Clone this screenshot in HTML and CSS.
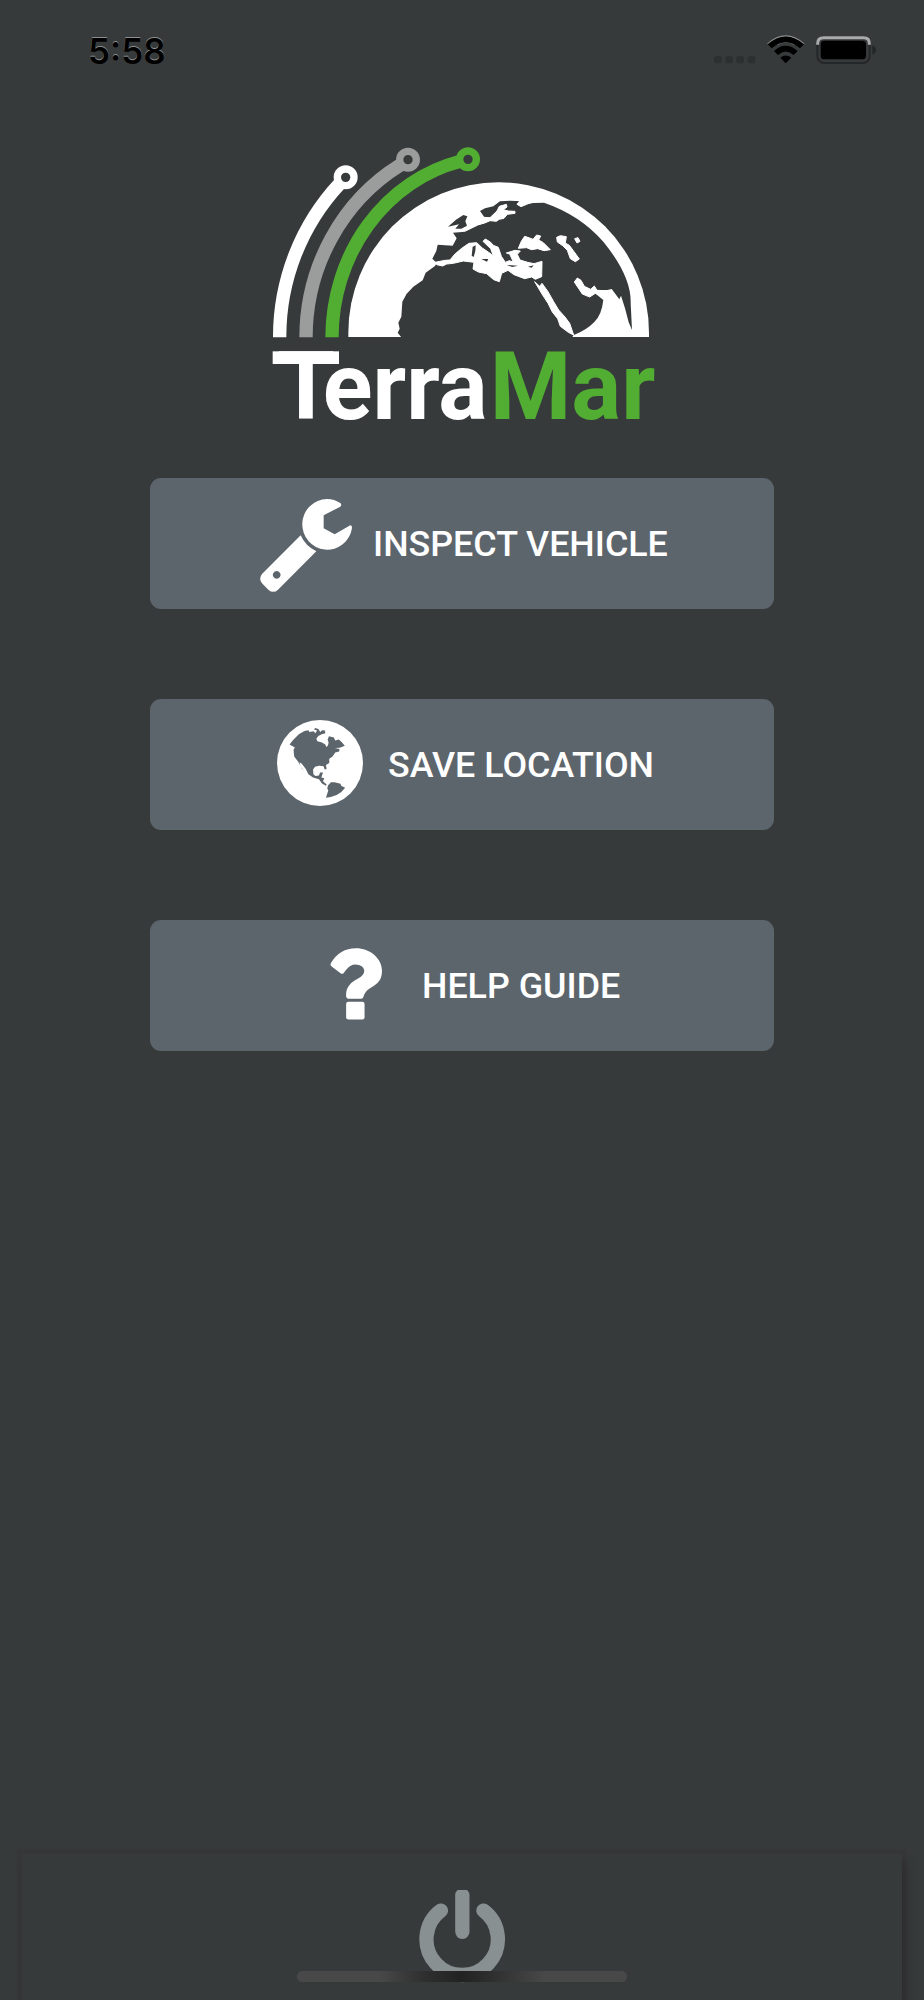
FILE: index.html
```html
<!DOCTYPE html>
<html lang="en">
<head>
    <meta charset="UTF-8">
    <meta name="viewport" content="width=device-width, initial-scale=1.0">
    <title>TerraMar</title>
    <link rel="stylesheet" href="styles.css">
</head>
<body>
<div class="screen">
    <header class="status-bar">
        <span class="time">5:58</span>
        <svg class="status-icons" viewBox="0 0 600 180" aria-hidden="true">
            <g fill="#2d3031">
                <rect x="42" y="108" width="23" height="22" rx="8"/>
                <rect x="76" y="108" width="23" height="22" rx="8"/>
                <rect x="109" y="108" width="23" height="22" rx="8"/>
                <rect x="143" y="108" width="23" height="22" rx="8"/>
            </g>
            <path d="M203 72Q257 24 312 72" fill="none" stroke="#8c8f8f" stroke-width="4"/>
            <path d="M230 74Q257 59 285 74" fill="none" stroke="#777" stroke-width="4"/>
            <g fill="#000">
                <path d="M203 73Q257 26 312 73L300 85Q257 48 215 85Z"/>
                <path d="M222 93Q257 62 293 93L281 105Q257 84 234 105Z"/>
                <path d="M241 113Q257 100 274 113L257 130Z"/>
            </g>
            <rect x="352" y="51" width="157" height="78" rx="20" fill="none" stroke="#242728" stroke-width="6"/>
            <path d="M353 74V70Q353 53 371 53H491Q508 53 508 70V74" fill="none" stroke="#a9abaa" stroke-width="9"/>
            <rect x="362" y="62" width="136" height="56" rx="11" fill="#000"/>
            <path d="M517 76Q528 80 528 90T517 104Z" fill="#242728"/>
        </svg>
    </header>
    <main>
        <svg class="logo" viewBox="0 0 1230 960" role="img" aria-label="TerraMar">
            <!-- orbit lines -->
            <g fill="none" stroke-width="40">
                <path d="M59 622A657 668 0 0 1 240 160" stroke="#fff"/>
                <path d="M138 622A578 602 0 0 1 421 105" stroke="#9b9d9c"/>
                <path d="M216 622A500 543 0 0 1 600 94" stroke="#52ae32"/>
            </g>
            <g fill="#373a3b" stroke-width="22">
                <circle cx="257" cy="142" r="25" stroke="#fff"/>
                <circle cx="444" cy="89" r="25" stroke="#9b9d9c"/>
                <circle cx="624" cy="88" r="25" stroke="#52ae32"/>
            </g>
            <!-- globe -->
            <path d="M265 621V608A451 451 0 0 1 1167 608V621Z" fill="#fff"/>
            <path class="land" d="M424 622L413 608 419 596 415 578 424 560 427 515 440 491 460 470 488 451 497 428 525 408 530 399 517 386 529 363 533 344 578 347 590 325 579 308 615 305 655 286 690 272 672 260 660 243 675 235 700 229 720 214 750 212 785 214 790 224 820 219 852 218Q960 255 1030 335Q1115 440 1112 520L1116 600 1106 577 1095 535 1083 497 1078 508 1055 477 1042 480 1027 483 1010 480 1005 490 1030 510Q1025 555 1003 576Q980 600 940 616L937 622Z"/>
            <path class="land" d="M564 290L588 269 610 255 622 259 616 274 621 287 604 296 586 296 597 283Z"/>
            <g class="water">
                <!-- Baltic and northern waters -->
                <path d="M660 247L670 262 690 263 711 243 718 229 739 223 741 231 730 239 745 243 765 244 765 250 742 253 732 265 718 268 709 274 690 272 674 279 655 284 655 245Z"/>
                <path d="M785 205L805 209 825 211 812 218 800 223 783 230 771 223Z"/>
                <!-- Mediterranean -->
                <path d="M525 397L555 391 570 390 584 373 605 355 627 340 650 338 667 354 686 367 700 377 692 356 669 334 676 327 691 336 700 346 715 352 724 379 736 397 748 392 760 396 749 372 739 369 765 361 781 363 772 373 780 390 803 397 822 401 846 394 845 440 826 448 815 441 794 446 762 434 744 421 725 430 718 455 701 449 680 431 655 426 639 417 642 397 610 393 580 400 560 402 548 408 530 404Z"/>
                <!-- Black Sea, Caspian -->
                <path d="M775 355L784 334 794 319 809 324 819 328 830 315 842 318 836 330 850 338 871 359 852 362 833 356 814 359 800 353Z"/>
                <path d="M890 322L901 317 919 320 916 339 928 346 940 362 958 387 946 395 931 386 922 361 908 347 892 336Z"/>
                <path d="M944 326L954 323 960 334 951 339Z"/>
                <!-- Red Sea, Persian Gulf -->
                <path d="M824 455L839 469 846 460 864 485 881 515 896 540 915 561 929 580 941 615 925 607 901 589 893 566 877 546 864 520 846 492Z"/>
                <path d="M943 456L952 444 963 451 973 469 992 478 1003 468 1011 481 1040 482 1042 505 1006 490 989 501 967 492Z"/>
            </g>
            <g class="land">
                <path d="M635 377L638 350 647 346 646 363 641 381Z"/>
                <path d="M664 387L685 387 681 395Z"/>
                <path d="M740 405L774 407 757 411Z"/>
                <path d="M804 410L821 406 815 413Z"/>
            </g>
            <!-- wordmark, the T has a wider bar -->
            <rect x="38" y="664" width="199" height="38" fill="#fff"/>
            <text class="wordmark" y="866" fill="#fff"><tspan x="51">T</tspan><tspan x="188" textLength="495" lengthAdjust="spacingAndGlyphs">erra</tspan></text>
            <text class="wordmark" x="689" y="866" fill="#52ae32" textLength="497" lengthAdjust="spacingAndGlyphs">Mar</text>
        </svg>
        <div class="menu">
            <button class="menu-button" type="button">
                <svg class="icon icon-wrench" viewBox="360 86 276 279" aria-hidden="true">
                    <path d="M602 99Q606 104 601 109L551 135V174L584 192L627 167Q636 161 636 173A75 76 0 1 1 561 86Q583 86 602 99Z"/>
                    <path fill-rule="evenodd" d="M482 195Q496 227 529 243L414 358Q400 371 385 358L366 339Q355 325 366 311ZM410 302A11.500 11.500 0 1 0 410.100 302Z"/>
                </svg>
                <span>INSPECT VEHICLE</span>
            </button>
            <button class="menu-button" type="button">
                <svg class="icon icon-globe" viewBox="110 90 260 260" aria-hidden="true">
                    <circle cx="240" cy="220" r="130"/>
                    <g fill="#5d656c">
                        <path d="M148 164L158 151 176 133 193 123 205 121 208 126 221 124 226 130 231 122 222 119 225 114 235 117 241 126 246 121 255 122 256 130 245 133 235 138 229 147 232 154 246 158 256 164 259 172 264 167 266 158 263 150 267 139 282 143 286 152 297 149 306 157 315 168 300 174 285 175 299 178 298 185 286 188 278 200 268 207 268 220 258 226 260 238 254 240 251 230 237 228 225 231 219 240 220 254 226 259 237 258 240 249 249 249 244 264 253 266 249 275 260 285 258 289 246 282 237 269 219 264 205 254 197 238 185 222 178 218 181 230 192 244 185 237 174 216 162 200 160 180 164 173Z"/>
                        <path d="M264 288L273 278 284 278 302 283 304 289 316 295Q298 321 258 325L265 303 262 297Z"/>
                    </g>
                </svg>
                <span>SAVE LOCATION</span>
            </button>
            <button class="menu-button" type="button">
                <svg class="icon icon-help" viewBox="90 113 158 218" aria-hidden="true">
                    <path d="M93 158Q119 113 169 113C211 113 248 143 248 182C248 212 233 222 215 233Q195 245 191 262Q189 267 184 267H147Q140 267 139 260C137 232 153 218 173 207Q195 195 194 181Q192 164 167 163Q151 163 138 180L131 189Q127 193 122 189L95 169Q89 165 93 158Z"/>
                    <rect x="139" y="276" width="56" height="54" rx="7"/>
                </svg>
                <span>HELP GUIDE</span>
            </button>
        </div>
    </main>
    <footer class="bottom-bar">
        <svg class="power" viewBox="416 150 260 280" aria-hidden="true">
            <g fill="none" stroke="#899091" stroke-width="43" stroke-linecap="round">
                <path d="M481 212A107.500 107.500 0 1 0 609 212"/>
                <path d="M545.500 166V276"/>
            </g>
        </svg>
        <div class="home-indicator"></div>
    </footer>
</div>
</body>
</html>
```
FILE: styles.css
```css
:root {
    --background: #373a3b;
    --button: #5d656c;
    --text-color: #ffffff;
}
* {
    box-sizing: border-box;
}
body {
    margin: 0;
    background-color: var(--background);
    color: var(--text-color);
    font-family: Roboto, sans-serif;
}
.screen {
    display: flex;
    flex-direction: column;
    width: 924px;
    height: 2000px;
    overflow: hidden;
}
.status-bar {
    display: flex;
    justify-content: space-between;
    height: 130px;
    padding: 20px 24px 0 88px;
}
.time {
    padding-top: 9px;
    font-family: Inter, sans-serif;
    font-size: 35px;
    font-weight: 600;
    line-height: 44px;
    color: #000;
    text-shadow: 0 -1px 0 #8c8f8f;
}
.status-icons {
    width: 200px;
    height: 60px;
}
main {
    display: flex;
    flex: 1;
    flex-direction: column;
}
.logo {
    display: block;
    width: 410px;
    height: 320px;
    margin-left: 260px;
}
.land {
    fill: var(--background);
}
.water {
    fill: #fff;
    stroke: #fff;
    stroke-width: 3;
    stroke-linejoin: round;
}
.wordmark {
    font-size: 281px;
    font-weight: 700;
}
.menu {
    display: flex;
    flex-direction: column;
    align-items: center;
    gap: 90px;
    margin-top: 28px;
}
.menu-button {
    display: flex;
    align-items: center;
    width: 624px;
    height: 131px;
    padding: 0;
    border: 0;
    border-radius: 11px;
    background-color: var(--button);
    color: var(--text-color);
    font-family: inherit;
    font-size: 35.8px;
    font-weight: 500;
    white-space: nowrap;
    cursor: pointer;
}
.icon {
    flex: none;
    fill: #fff;
}
.icon-wrench {
    width: 92px;
    height: 93px;
    margin: 3px 21px 0 110px;
}
.icon-globe {
    width: 86px;
    height: 86px;
    margin: 0 25px 3px 127px;
}
.icon-help {
    width: 52px;
    height: 72px;
    margin: 0 40px 3px 180px;
}
.bottom-bar {
    display: flex;
    flex-direction: column;
    align-items: center;
    height: 146px;
    margin: 0 22px;
    padding-top: 36px;
    background-color: var(--background);
    box-shadow: 5px 8px 8px rgba(44, 38, 40, 0.6), 0 0 0 5px rgba(50, 51, 52, 0.3);
}
.power {
    flex: none;
    width: 87px;
    height: 93px;
}
.home-indicator {
    position: relative;
    flex: none;
    width: 330px;
    height: 11px;
    margin-top: -12px;
    border-radius: 6px;
    background: linear-gradient(90deg, #484848 25%, #303030 38%, #222 50%, #303030 60%, #484848 75%);
}
```
